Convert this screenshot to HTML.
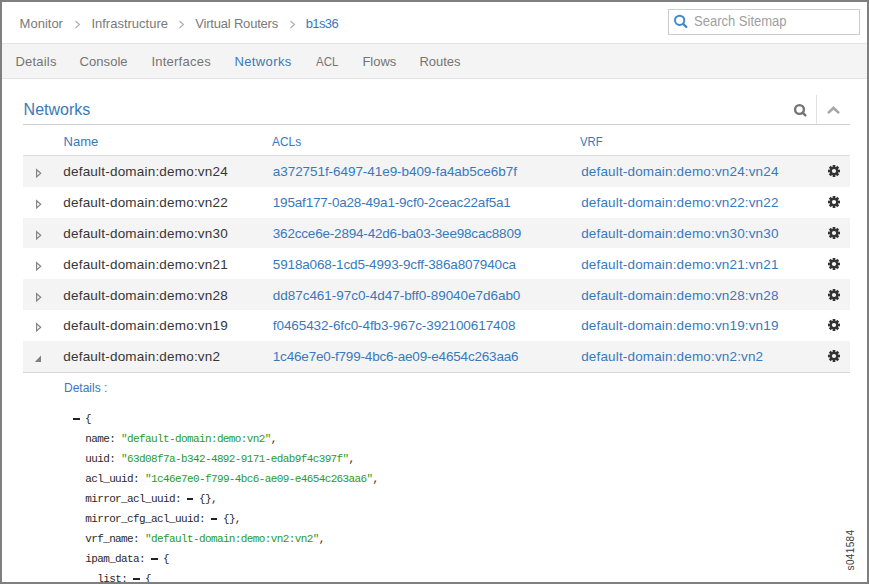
<!DOCTYPE html>
<html><head><meta charset="utf-8"><style>
html,body{margin:0;padding:0;}
body{width:869px;height:584px;position:relative;overflow:hidden;background:#fff;font-family:"Liberation Sans",sans-serif;}
.a{position:absolute;}
.t{position:absolute;white-space:nowrap;}
.s{color:#2a9a2a;}
.d{position:relative;color:transparent;}
.d::after{content:'';position:absolute;left:0px;top:5.2px;width:6.5px;height:2px;background:#222;}
#frame{position:absolute;left:0;top:0;width:869px;height:584px;box-sizing:border-box;border:2px solid #7f7f7f;z-index:10;pointer-events:none;}
</style></head><body>
<div class="t" style="left:19.60px;top:17.19px;font-size:13px;line-height:13px;color:#7a7a7a;letter-spacing:0px;font-family:'Liberation Sans', sans-serif;font-weight:normal;">Monitor</div>
<div class="t" style="left:91.40px;top:17.19px;font-size:13px;line-height:13px;color:#7a7a7a;letter-spacing:0px;font-family:'Liberation Sans', sans-serif;font-weight:normal;">Infrastructure</div>
<div class="t" style="left:195.30px;top:17.19px;font-size:13px;line-height:13px;color:#7a7a7a;letter-spacing:-0.2px;font-family:'Liberation Sans', sans-serif;font-weight:normal;">Virtual Routers</div>
<div class="t" style="left:305.70px;top:17.19px;font-size:13px;line-height:13px;color:#3879bd;letter-spacing:-0.6px;font-family:'Liberation Sans', sans-serif;font-weight:normal;">b1s36</div>
<svg class="a" style="left:74.8px;top:20px" width="6" height="9" viewBox="0 0 6 9"><polyline points="0.5,1 4.5,4.5 0.5,8" fill="none" stroke="#a9acb4" stroke-width="1.1"/></svg>
<svg class="a" style="left:178.7px;top:20px" width="6" height="9" viewBox="0 0 6 9"><polyline points="0.5,1 4.5,4.5 0.5,8" fill="none" stroke="#a9acb4" stroke-width="1.1"/></svg>
<svg class="a" style="left:289.7px;top:20px" width="6" height="9" viewBox="0 0 6 9"><polyline points="0.5,1 4.5,4.5 0.5,8" fill="none" stroke="#a9acb4" stroke-width="1.1"/></svg>
<div class="a" style="left:668px;top:9px;width:190px;height:24px;border:1px solid #cccccc;background:#fff"></div>
<svg class="a" style="left:668px;top:10px" width="24" height="22" viewBox="668 10 24 22"><circle cx="679.65" cy="20.35" r="4.65" fill="none" stroke="#3f89cc" stroke-width="2"/><line x1="683.2" y1="23.9" x2="686.3" y2="27" stroke="#3f89cc" stroke-width="2.4" stroke-linecap="round"/></svg>
<div class="t" style="left:694.30px;top:14.05px;font-size:14px;line-height:14px;color:#a0a0a0;letter-spacing:0px;font-family:'Liberation Sans', sans-serif;font-weight:normal;transform:scaleX(0.929);transform-origin:0 0;">Search Sitemap</div>
<div class="a" style="left:2px;top:43px;width:865px;height:34px;border-top:1px solid #e4e4e4;border-bottom:1px solid #e4e4e4;background:#f4f4f4"></div>
<div class="t" style="left:15.50px;top:54.99px;font-size:13px;line-height:13px;color:#747474;letter-spacing:0.2px;font-family:'Liberation Sans', sans-serif;font-weight:normal;">Details</div>
<div class="t" style="left:79.60px;top:54.99px;font-size:13px;line-height:13px;color:#747474;letter-spacing:0.05px;font-family:'Liberation Sans', sans-serif;font-weight:normal;">Console</div>
<div class="t" style="left:151.40px;top:54.99px;font-size:13px;line-height:13px;color:#747474;letter-spacing:0.24px;font-family:'Liberation Sans', sans-serif;font-weight:normal;">Interfaces</div>
<div class="t" style="left:234.40px;top:54.99px;font-size:13px;line-height:13px;color:#3879bd;letter-spacing:0.4px;font-family:'Liberation Sans', sans-serif;font-weight:normal;">Networks</div>
<div class="t" style="left:315.90px;top:54.99px;font-size:13px;line-height:13px;color:#747474;letter-spacing:0px;font-family:'Liberation Sans', sans-serif;font-weight:normal;transform:scaleX(0.885);transform-origin:0 0;">ACL</div>
<div class="t" style="left:362.40px;top:54.99px;font-size:13px;line-height:13px;color:#747474;letter-spacing:0px;font-family:'Liberation Sans', sans-serif;font-weight:normal;">Flows</div>
<div class="t" style="left:419.40px;top:54.99px;font-size:13px;line-height:13px;color:#747474;letter-spacing:0px;font-family:'Liberation Sans', sans-serif;font-weight:normal;">Routes</div>
<div class="t" style="left:23.60px;top:101.65px;font-size:16px;line-height:16px;color:#3879bd;letter-spacing:0px;font-family:'Liberation Sans', sans-serif;font-weight:normal;">Networks</div>
<div class="a" style="left:23px;top:124px;width:827px;height:1px;background:#d2d2d2"></div>
<svg class="a" style="left:792px;top:102px" width="17" height="17" viewBox="0 0 17 17"><circle cx="7.5" cy="7.5" r="4.4" fill="none" stroke="#747474" stroke-width="2.4"/><line x1="10.6" y1="10.6" x2="13.4" y2="13.4" stroke="#747474" stroke-width="2.4" stroke-linecap="round"/></svg>
<div class="a" style="left:816px;top:95px;width:1px;height:29px;background:#e2e2e2"></div>
<svg class="a" style="left:820px;top:98px" width="28" height="24" viewBox="820 98 28 24"><polygon points="827.1,112.2 833.5,105.9 839.9,112.2 838.2,113.9 833.5,109.8 828.8,113.9" fill="#a6a6a6"/></svg>
<div class="t" style="left:63.60px;top:134.79px;font-size:13px;line-height:13px;color:#3879bd;letter-spacing:0px;font-family:'Liberation Sans', sans-serif;font-weight:normal;">Name</div>
<div class="t" style="left:272.30px;top:134.79px;font-size:13px;line-height:13px;color:#3879bd;letter-spacing:0px;font-family:'Liberation Sans', sans-serif;font-weight:normal;transform:scaleX(0.915);transform-origin:0 0;">ACLs</div>
<div class="t" style="left:580.40px;top:134.79px;font-size:13px;line-height:13px;color:#3879bd;letter-spacing:0px;font-family:'Liberation Sans', sans-serif;font-weight:normal;transform:scaleX(0.87);transform-origin:0 0;">VRF</div>
<div class="a" style="left:23px;top:155px;width:827px;height:1px;background:#dedede"></div>
<div class="a" style="left:23px;top:156px;width:827px;height:31px;background:#f4f4f4"></div>
<div class="t" style="left:63.30px;top:164.97px;font-size:13.5px;line-height:13.5px;color:#363636;letter-spacing:0.2px;font-family:'Liberation Sans', sans-serif;font-weight:normal;">default-domain:demo:vn24</div>
<div class="t" style="left:272.80px;top:164.97px;font-size:13.5px;line-height:13.5px;color:#3879bd;letter-spacing:-0.06px;font-family:'Liberation Sans', sans-serif;font-weight:normal;">a372751f-6497-41e9-b409-fa4ab5ce6b7f</div>
<div class="t" style="left:581.20px;top:164.97px;font-size:13.5px;line-height:13.5px;color:#3879bd;letter-spacing:0.157px;font-family:'Liberation Sans', sans-serif;font-weight:normal;">default-domain:demo:vn24:vn24</div>
<svg class="a" style="left:826.9px;top:163.8px" width="14" height="14" viewBox="-7 -7 14 14"><g fill="#333333"><rect x="-1.35" y="-6" width="2.7" height="12" transform="rotate(0)"/><rect x="-1.35" y="-6" width="2.7" height="12" transform="rotate(45)"/><rect x="-1.35" y="-6" width="2.7" height="12" transform="rotate(90)"/><rect x="-1.35" y="-6" width="2.7" height="12" transform="rotate(135)"/><circle r="4.3"/></g><circle r="2.1" fill="#f4f4f4"/></svg>
<svg class="a" style="left:35px;top:168.0px" width="8" height="11" viewBox="0 0 8 11"><polygon points="1.6,1.7 5.7,5.3 1.6,9.0" fill="none" stroke="#848484" stroke-width="1.2"/></svg>
<div class="t" style="left:63.30px;top:195.97px;font-size:13.5px;line-height:13.5px;color:#363636;letter-spacing:0.2px;font-family:'Liberation Sans', sans-serif;font-weight:normal;">default-domain:demo:vn22</div>
<div class="t" style="left:272.80px;top:195.97px;font-size:13.5px;line-height:13.5px;color:#3879bd;letter-spacing:-0.19px;font-family:'Liberation Sans', sans-serif;font-weight:normal;">195af177-0a28-49a1-9cf0-2ceac22af5a1</div>
<div class="t" style="left:581.20px;top:195.97px;font-size:13.5px;line-height:13.5px;color:#3879bd;letter-spacing:0.157px;font-family:'Liberation Sans', sans-serif;font-weight:normal;">default-domain:demo:vn22:vn22</div>
<svg class="a" style="left:826.9px;top:194.8px" width="14" height="14" viewBox="-7 -7 14 14"><g fill="#333333"><rect x="-1.35" y="-6" width="2.7" height="12" transform="rotate(0)"/><rect x="-1.35" y="-6" width="2.7" height="12" transform="rotate(45)"/><rect x="-1.35" y="-6" width="2.7" height="12" transform="rotate(90)"/><rect x="-1.35" y="-6" width="2.7" height="12" transform="rotate(135)"/><circle r="4.3"/></g><circle r="2.1" fill="#ffffff"/></svg>
<svg class="a" style="left:35px;top:199.0px" width="8" height="11" viewBox="0 0 8 11"><polygon points="1.6,1.7 5.7,5.3 1.6,9.0" fill="none" stroke="#848484" stroke-width="1.2"/></svg>
<div class="a" style="left:23px;top:218px;width:827px;height:30px;background:#f4f4f4"></div>
<div class="t" style="left:63.30px;top:226.97px;font-size:13.5px;line-height:13.5px;color:#363636;letter-spacing:0.2px;font-family:'Liberation Sans', sans-serif;font-weight:normal;">default-domain:demo:vn30</div>
<div class="t" style="left:272.80px;top:226.97px;font-size:13.5px;line-height:13.5px;color:#3879bd;letter-spacing:-0.194px;font-family:'Liberation Sans', sans-serif;font-weight:normal;">362cce6e-2894-42d6-ba03-3ee98cac8809</div>
<div class="t" style="left:581.20px;top:226.97px;font-size:13.5px;line-height:13.5px;color:#3879bd;letter-spacing:0.157px;font-family:'Liberation Sans', sans-serif;font-weight:normal;">default-domain:demo:vn30:vn30</div>
<svg class="a" style="left:826.9px;top:225.8px" width="14" height="14" viewBox="-7 -7 14 14"><g fill="#333333"><rect x="-1.35" y="-6" width="2.7" height="12" transform="rotate(0)"/><rect x="-1.35" y="-6" width="2.7" height="12" transform="rotate(45)"/><rect x="-1.35" y="-6" width="2.7" height="12" transform="rotate(90)"/><rect x="-1.35" y="-6" width="2.7" height="12" transform="rotate(135)"/><circle r="4.3"/></g><circle r="2.1" fill="#f4f4f4"/></svg>
<svg class="a" style="left:35px;top:230.0px" width="8" height="11" viewBox="0 0 8 11"><polygon points="1.6,1.7 5.7,5.3 1.6,9.0" fill="none" stroke="#848484" stroke-width="1.2"/></svg>
<div class="t" style="left:63.30px;top:257.97px;font-size:13.5px;line-height:13.5px;color:#363636;letter-spacing:0.2px;font-family:'Liberation Sans', sans-serif;font-weight:normal;">default-domain:demo:vn21</div>
<div class="t" style="left:272.80px;top:257.97px;font-size:13.5px;line-height:13.5px;color:#3879bd;letter-spacing:-0.143px;font-family:'Liberation Sans', sans-serif;font-weight:normal;">5918a068-1cd5-4993-9cff-386a807940ca</div>
<div class="t" style="left:581.20px;top:257.97px;font-size:13.5px;line-height:13.5px;color:#3879bd;letter-spacing:0.157px;font-family:'Liberation Sans', sans-serif;font-weight:normal;">default-domain:demo:vn21:vn21</div>
<svg class="a" style="left:826.9px;top:256.8px" width="14" height="14" viewBox="-7 -7 14 14"><g fill="#333333"><rect x="-1.35" y="-6" width="2.7" height="12" transform="rotate(0)"/><rect x="-1.35" y="-6" width="2.7" height="12" transform="rotate(45)"/><rect x="-1.35" y="-6" width="2.7" height="12" transform="rotate(90)"/><rect x="-1.35" y="-6" width="2.7" height="12" transform="rotate(135)"/><circle r="4.3"/></g><circle r="2.1" fill="#ffffff"/></svg>
<svg class="a" style="left:35px;top:261.0px" width="8" height="11" viewBox="0 0 8 11"><polygon points="1.6,1.7 5.7,5.3 1.6,9.0" fill="none" stroke="#848484" stroke-width="1.2"/></svg>
<div class="a" style="left:23px;top:279px;width:827px;height:31px;background:#f4f4f4"></div>
<div class="t" style="left:63.30px;top:288.97px;font-size:13.5px;line-height:13.5px;color:#363636;letter-spacing:0.2px;font-family:'Liberation Sans', sans-serif;font-weight:normal;">default-domain:demo:vn28</div>
<div class="t" style="left:272.80px;top:288.97px;font-size:13.5px;line-height:13.5px;color:#3879bd;letter-spacing:-0.04px;font-family:'Liberation Sans', sans-serif;font-weight:normal;">dd87c461-97c0-4d47-bff0-89040e7d6ab0</div>
<div class="t" style="left:581.20px;top:288.97px;font-size:13.5px;line-height:13.5px;color:#3879bd;letter-spacing:0.157px;font-family:'Liberation Sans', sans-serif;font-weight:normal;">default-domain:demo:vn28:vn28</div>
<svg class="a" style="left:826.9px;top:287.8px" width="14" height="14" viewBox="-7 -7 14 14"><g fill="#333333"><rect x="-1.35" y="-6" width="2.7" height="12" transform="rotate(0)"/><rect x="-1.35" y="-6" width="2.7" height="12" transform="rotate(45)"/><rect x="-1.35" y="-6" width="2.7" height="12" transform="rotate(90)"/><rect x="-1.35" y="-6" width="2.7" height="12" transform="rotate(135)"/><circle r="4.3"/></g><circle r="2.1" fill="#f4f4f4"/></svg>
<svg class="a" style="left:35px;top:292.0px" width="8" height="11" viewBox="0 0 8 11"><polygon points="1.6,1.7 5.7,5.3 1.6,9.0" fill="none" stroke="#848484" stroke-width="1.2"/></svg>
<div class="t" style="left:63.30px;top:318.97px;font-size:13.5px;line-height:13.5px;color:#363636;letter-spacing:0.2px;font-family:'Liberation Sans', sans-serif;font-weight:normal;">default-domain:demo:vn19</div>
<div class="t" style="left:272.80px;top:318.97px;font-size:13.5px;line-height:13.5px;color:#3879bd;letter-spacing:-0.08px;font-family:'Liberation Sans', sans-serif;font-weight:normal;">f0465432-6fc0-4fb3-967c-392100617408</div>
<div class="t" style="left:581.20px;top:318.97px;font-size:13.5px;line-height:13.5px;color:#3879bd;letter-spacing:0.157px;font-family:'Liberation Sans', sans-serif;font-weight:normal;">default-domain:demo:vn19:vn19</div>
<svg class="a" style="left:826.9px;top:317.8px" width="14" height="14" viewBox="-7 -7 14 14"><g fill="#333333"><rect x="-1.35" y="-6" width="2.7" height="12" transform="rotate(0)"/><rect x="-1.35" y="-6" width="2.7" height="12" transform="rotate(45)"/><rect x="-1.35" y="-6" width="2.7" height="12" transform="rotate(90)"/><rect x="-1.35" y="-6" width="2.7" height="12" transform="rotate(135)"/><circle r="4.3"/></g><circle r="2.1" fill="#ffffff"/></svg>
<svg class="a" style="left:35px;top:322.0px" width="8" height="11" viewBox="0 0 8 11"><polygon points="1.6,1.7 5.7,5.3 1.6,9.0" fill="none" stroke="#848484" stroke-width="1.2"/></svg>
<div class="a" style="left:23px;top:341px;width:827px;height:31px;background:#f4f4f4"></div>
<div class="t" style="left:63.30px;top:349.97px;font-size:13.5px;line-height:13.5px;color:#363636;letter-spacing:0.2px;font-family:'Liberation Sans', sans-serif;font-weight:normal;">default-domain:demo:vn2</div>
<div class="t" style="left:272.80px;top:349.97px;font-size:13.5px;line-height:13.5px;color:#3879bd;letter-spacing:-0.183px;font-family:'Liberation Sans', sans-serif;font-weight:normal;">1c46e7e0-f799-4bc6-ae09-e4654c263aa6</div>
<div class="t" style="left:581.20px;top:349.97px;font-size:13.5px;line-height:13.5px;color:#3879bd;letter-spacing:0.157px;font-family:'Liberation Sans', sans-serif;font-weight:normal;">default-domain:demo:vn2:vn2</div>
<svg class="a" style="left:826.9px;top:348.8px" width="14" height="14" viewBox="-7 -7 14 14"><g fill="#333333"><rect x="-1.35" y="-6" width="2.7" height="12" transform="rotate(0)"/><rect x="-1.35" y="-6" width="2.7" height="12" transform="rotate(45)"/><rect x="-1.35" y="-6" width="2.7" height="12" transform="rotate(90)"/><rect x="-1.35" y="-6" width="2.7" height="12" transform="rotate(135)"/><circle r="4.3"/></g><circle r="2.1" fill="#f4f4f4"/></svg>
<svg class="a" style="left:34px;top:355.0px" width="8" height="8" viewBox="0 0 8 8"><polygon points="0.8,7 7,0.6 7,7" fill="#808080"/></svg>
<div class="a" style="left:23px;top:372px;width:827px;height:1px;background:#d6d6d6"></div>
<div class="t" style="left:64.00px;top:381.64px;font-size:12px;line-height:12px;color:#3879bd;letter-spacing:0px;font-family:'Liberation Sans', sans-serif;font-weight:normal;">Details :</div>
<div class="t" style="left:73.00px;top:413.57px;font-size:11px;line-height:11px;color:#2a2a2a;letter-spacing:-0.615px;font-family:'Liberation Mono', monospace;font-weight:normal;white-space:pre;"><span class="d">-</span> {</div>
<div class="t" style="left:85.20px;top:433.57px;font-size:11px;line-height:11px;color:#2a2a2a;letter-spacing:-0.615px;font-family:'Liberation Mono', monospace;font-weight:normal;white-space:pre;">name: <span class="s">"default-domain:demo:vn2"</span>,</div>
<div class="t" style="left:85.20px;top:453.57px;font-size:11px;line-height:11px;color:#2a2a2a;letter-spacing:-0.615px;font-family:'Liberation Mono', monospace;font-weight:normal;white-space:pre;">uuid: <span class="s">"63d08f7a-b342-4892-9171-edab9f4c397f"</span>,</div>
<div class="t" style="left:85.20px;top:473.57px;font-size:11px;line-height:11px;color:#2a2a2a;letter-spacing:-0.615px;font-family:'Liberation Mono', monospace;font-weight:normal;white-space:pre;">acl_uuid: <span class="s">"1c46e7e0-f799-4bc6-ae09-e4654c263aa6"</span>,</div>
<div class="t" style="left:85.20px;top:493.57px;font-size:11px;line-height:11px;color:#2a2a2a;letter-spacing:-0.615px;font-family:'Liberation Mono', monospace;font-weight:normal;white-space:pre;">mirror_acl_uuid: <span class="d">-</span> {},</div>
<div class="t" style="left:85.20px;top:513.57px;font-size:11px;line-height:11px;color:#2a2a2a;letter-spacing:-0.615px;font-family:'Liberation Mono', monospace;font-weight:normal;white-space:pre;">mirror_cfg_acl_uuid: <span class="d">-</span> {},</div>
<div class="t" style="left:85.20px;top:533.57px;font-size:11px;line-height:11px;color:#2a2a2a;letter-spacing:-0.615px;font-family:'Liberation Mono', monospace;font-weight:normal;white-space:pre;">vrf_name: <span class="s">"default-domain:demo:vn2:vn2"</span>,</div>
<div class="t" style="left:85.20px;top:553.57px;font-size:11px;line-height:11px;color:#2a2a2a;letter-spacing:-0.615px;font-family:'Liberation Mono', monospace;font-weight:normal;white-space:pre;">ipam_data: <span class="d">-</span> {</div>
<div class="t" style="left:97.20px;top:573.57px;font-size:11px;line-height:11px;color:#2a2a2a;letter-spacing:-0.615px;font-family:'Liberation Mono', monospace;font-weight:normal;white-space:pre;">list: <span class="d">-</span> {</div>
<div class="a" style="left:821.4px;top:544.5px;width:60px;height:10px;font-family:'Liberation Sans',sans-serif;font-size:10px;line-height:10px;letter-spacing:0.35px;color:#3a3a3a;transform:rotate(-90deg);transform-origin:center;text-align:center">s041584</div>
<div id="frame"></div>
</body></html>
